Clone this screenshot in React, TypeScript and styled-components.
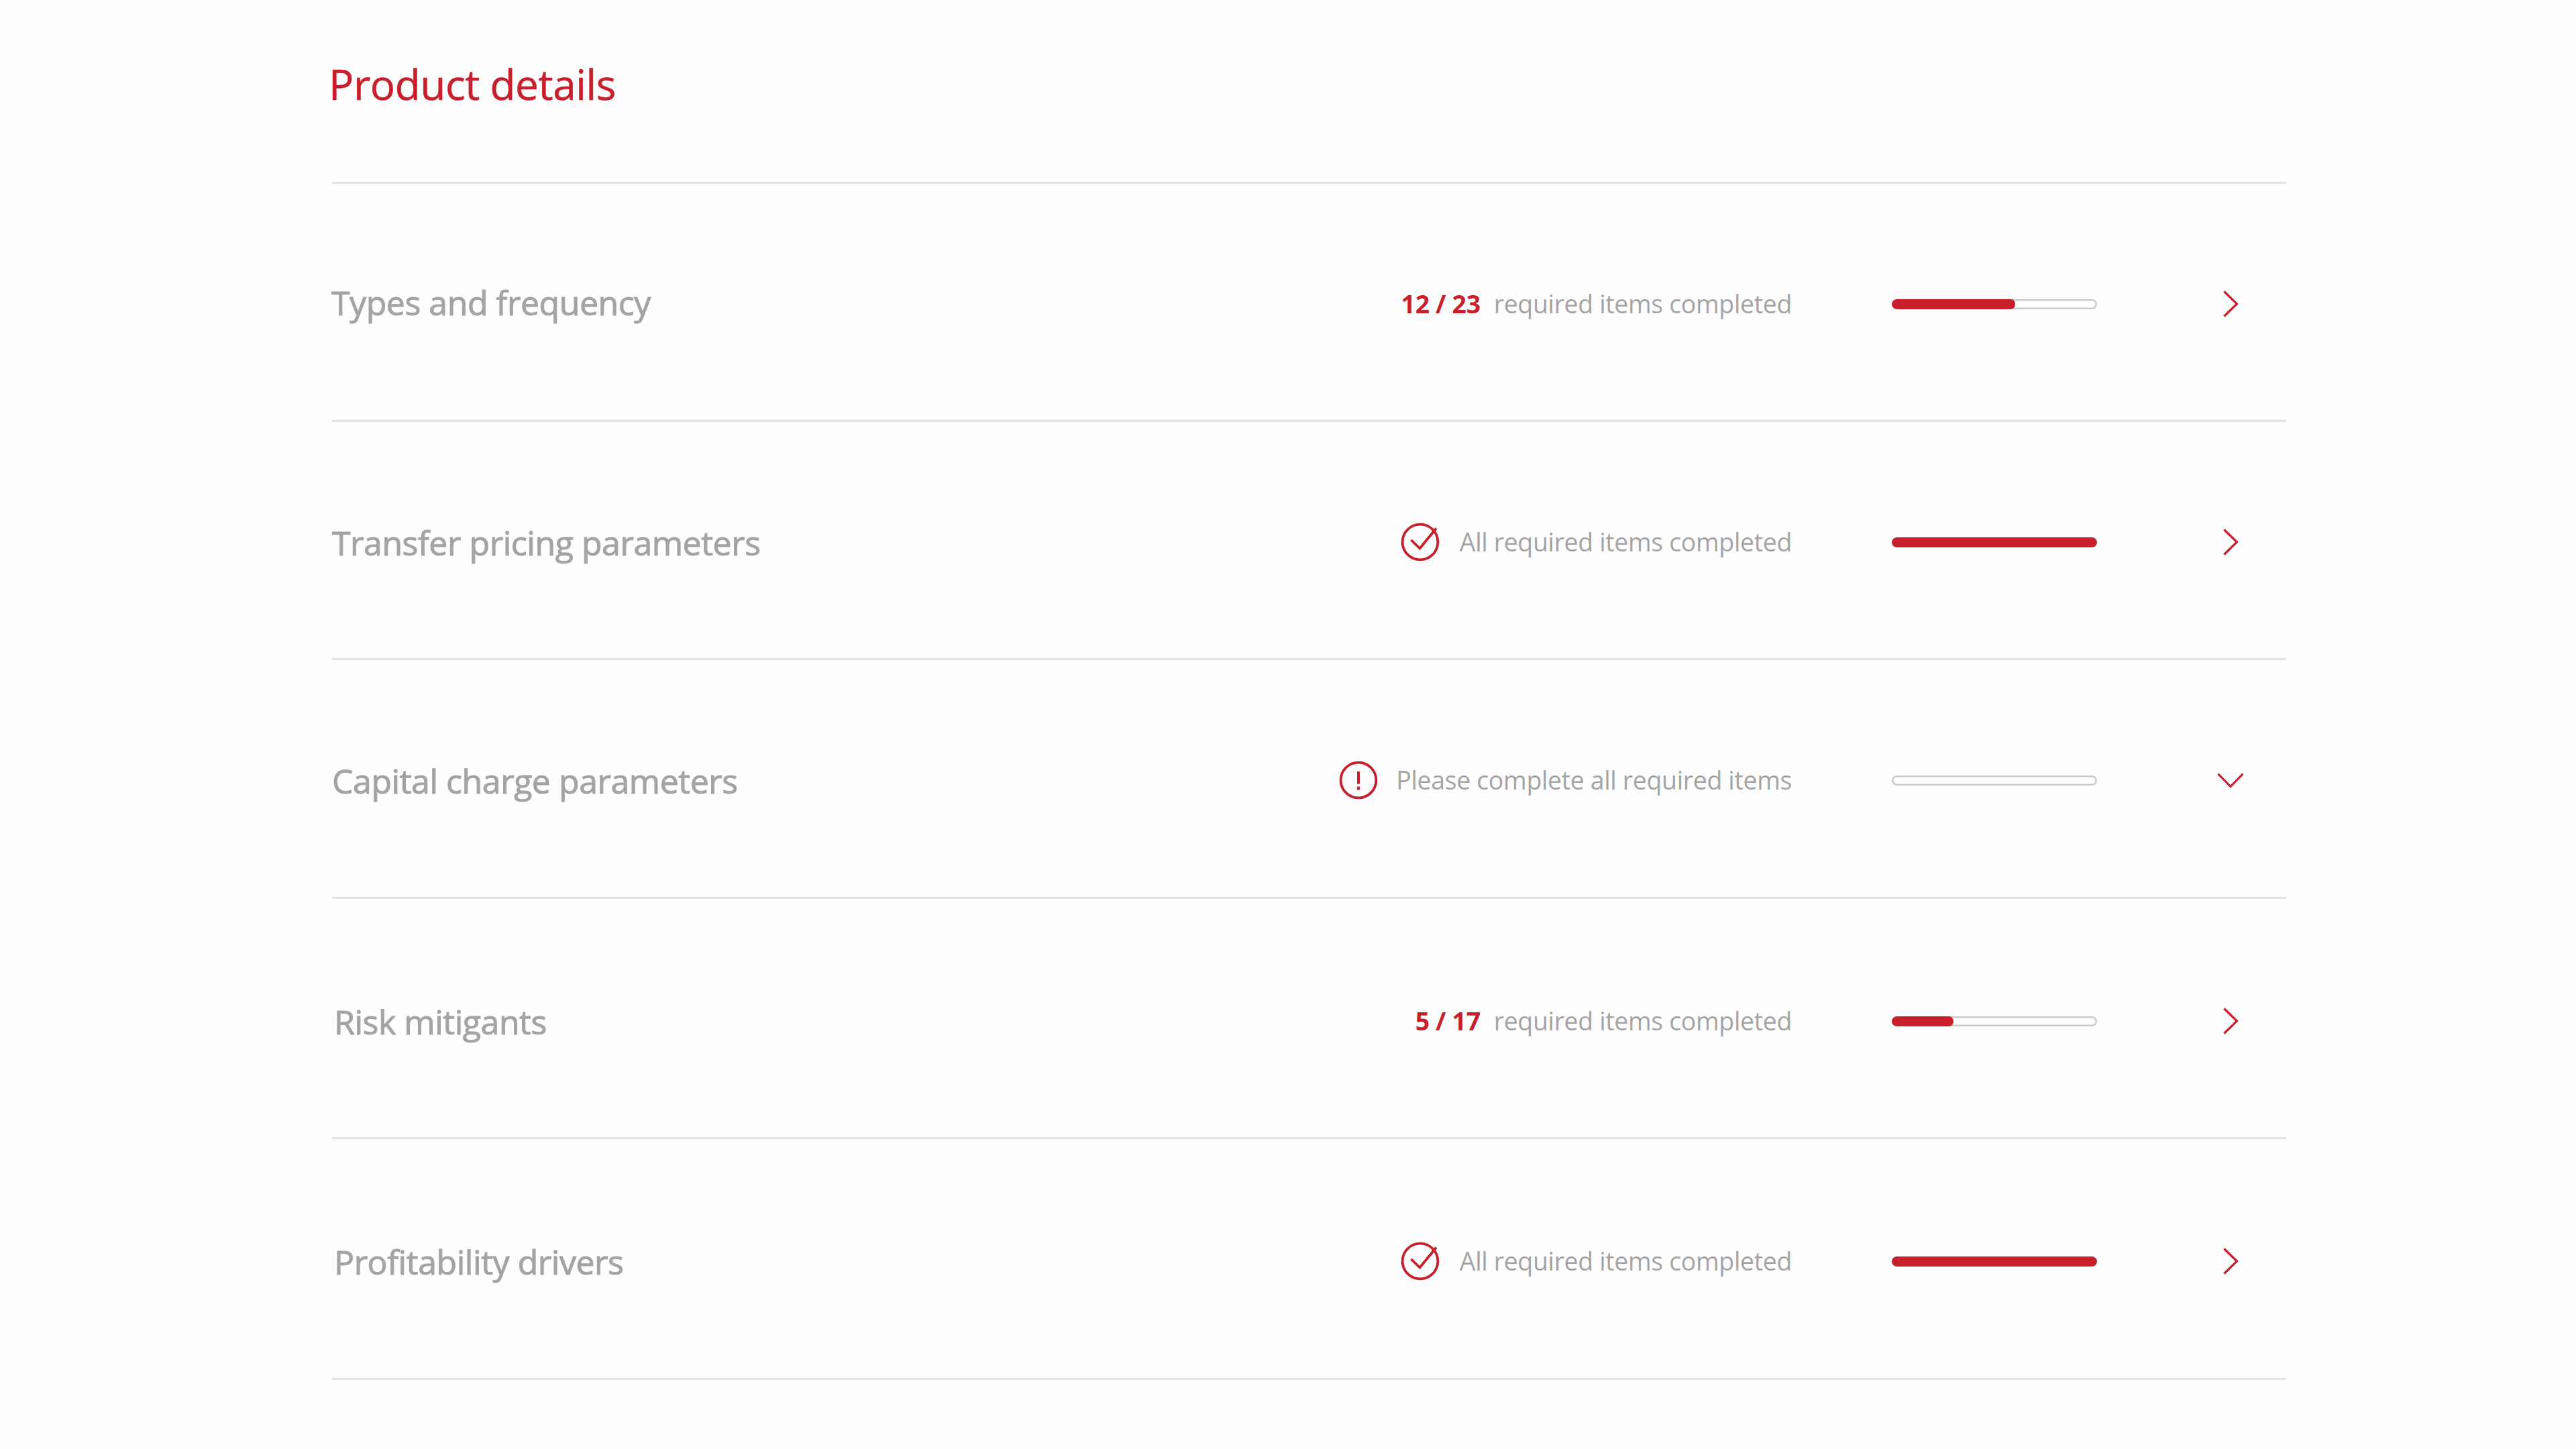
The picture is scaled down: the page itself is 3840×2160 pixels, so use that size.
import React from "react";
import styled, { createGlobalStyle } from "styled-components";

const RED = "#c91f2c";
const GREY = "#a4a4a4";

const GlobalStyle = createGlobalStyle`
  * { box-sizing: border-box; }
  body { margin: 0; background: #fefefe; font-family: "Open Sans", "Noto Sans", sans-serif; }
`;

const Page = styled.main`
  width: 3840px;
  height: 2160px;
  padding: 0 432px 0 495px;
  overflow: hidden;
  background: #fefefe;
`;

const Header = styled.header`
  height: 274px;
  padding-top: 81px;
  border-bottom: 3px solid #e2e2e2;
`;

const Title = styled.h1`
  margin: 0 0 0 -5px;
  font-size: 62px;
  line-height: 88px;
  font-weight: 400;
  letter-spacing: -0.4px;
  white-space: nowrap;
  color: ${RED};
  -webkit-text-stroke: 0.6px ${RED};
`;

const List = styled.ul`
  margin: 0;
  padding: 0;
  list-style: none;
`;

const Row = styled.li<{ $height: number; $top: number }>`
  display: grid;
  grid-template-columns: 1fr auto 306px 221px;
  grid-auto-rows: 80px;
  align-items: center;
  align-content: start;
  height: ${(p) => p.$height}px;
  padding: ${(p) => p.$top}px 61px 0 0;
  border-bottom: 3px solid #e2e2e2;
`;

const Label = styled.h2<{ $drop: number; $indent: number }>`
  margin: ${(p) => p.$drop * 2}px 0 0 ${(p) => p.$indent}px;
  font-size: 50px;
  line-height: 72px;
  font-weight: 400;
  letter-spacing: -0.45px;
  white-space: nowrap;
  color: ${GREY};
  -webkit-text-stroke: 1px ${GREY};
`;

const Status = styled.div`
  display: flex;
  align-items: center;
  margin-right: 149px;
`;

const StatusText = styled.span`
  font-size: 37.5px;
  line-height: 54px;
  letter-spacing: -0.37px;
  color: ${GREY};
  white-space: nowrap;
`;

const Count = styled(StatusText)`
  margin-right: 20px;
  font-weight: 700;
  color: ${RED};
`;

const StatusIcon = styled.svg<{ $gap: number }>`
  width: 60px;
  height: 60px;
  margin-right: ${(p) => p.$gap}px;
  flex: none;
  fill: none;
  stroke: ${RED};
  stroke-width: 3.8;
`;

const Track = styled.div`
  height: 15px;
  border-radius: 8px;
  box-shadow: inset 0 0 0 2.5px #cbcbcb;
  overflow: hidden;
`;

const Fill = styled.div`
  height: 100%;
  border-radius: 7px;
  background: ${RED};
`;

const Chevron = styled.svg`
  width: 44px;
  height: 44px;
  justify-self: end;
  fill: none;
  stroke: ${RED};
  stroke-width: 3.2;
`;

type Kind = "count" | "done" | "todo";

interface Item {
  label: string;
  kind: Kind;
  count?: string;
  text: string;
  percent: number;
  open?: boolean;
  height: number;
  top: number;
  drop: number;
  indent: number;
}

const items: Item[] = [
  { label: "Types and frequency", kind: "count", count: "12 / 23", text: "required items completed", percent: 60, height: 355, top: 139, drop: -2, indent: -1 },
  { label: "Transfer pricing parameters", kind: "done", text: "All required items completed", percent: 100, height: 355, top: 139, drop: 1, indent: 0 },
  { label: "Capital charge parameters", kind: "todo", text: "Please complete all required items", percent: 0, open: true, height: 356, top: 139, drop: 1, indent: 0 },
  { label: "Risk mitigants", kind: "count", count: "5 / 17", text: "required items completed", percent: 30, height: 358, top: 142, drop: 1, indent: 3 },
  { label: "Profitability drivers", kind: "done", text: "All required items completed", percent: 100, height: 359, top: 142, drop: 1, indent: 3 },
];

const CheckIcon = () => (
  <StatusIcon viewBox="0 0 60 60" $gap={29}>
    <circle cx="30" cy="30" r="26.4" />
    <path d="M16.5 27 L29.5 39.5 L54 9.5" />
  </StatusIcon>
);

const AlertIcon = () => (
  <StatusIcon viewBox="0 0 60 60" $gap={26}>
    <circle cx="30" cy="30" r="26.4" />
    <path d="M30 17 V35.5 M30 39.5 V44.5" strokeWidth="4" />
  </StatusIcon>
);

export default function App() {
  return (
    <>
      <GlobalStyle />
      <Page>
        <Header>
          <Title>Product details</Title>
        </Header>
        <List>
          {items.map((item) => (
            <Row key={item.label} $height={item.height} $top={item.top}>
              <Label $drop={item.drop} $indent={item.indent}>{item.label}</Label>
              <Status>
                {item.kind === "done" && <CheckIcon />}
                {item.kind === "todo" && <AlertIcon />}
                {item.count && <Count as="strong">{item.count}</Count>}
                <StatusText>{item.text}</StatusText>
              </Status>
              <Track>
                <Fill style={{ width: `${item.percent}%` }} />
              </Track>
              <Chevron viewBox="0 0 44 44">
                <path d={item.open ? "M3.5 12.5 L22 31.5 L40.5 12.5" : "M12.5 3.5 L31.5 22 L12.5 40.5"} />
              </Chevron>
            </Row>
          ))}
        </List>
      </Page>
    </>
  );
}
